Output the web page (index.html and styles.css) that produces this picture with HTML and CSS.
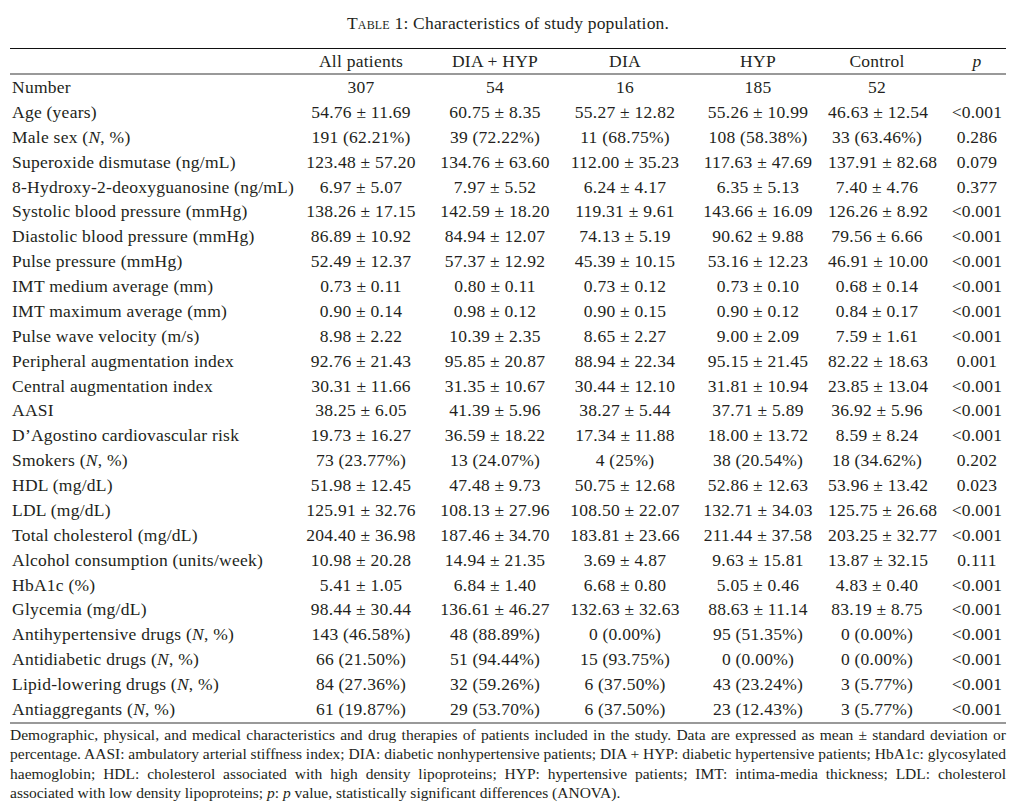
FILE: index.html
```html
<!DOCTYPE html>
<html>
<head>
<meta charset="utf-8">
<link rel="stylesheet" href="styles.css">
</head>
<body>
<div class="page">
  <div class="title"><span class="sc">Table</span> 1: Characteristics of study population.</div>
  <table class="data">
    <colgroup>
      <col class="c-label"><col class="c1"><col class="c2"><col class="c3"><col class="c4"><col class="c5"><col class="c6">
    </colgroup>
    <thead>
      <tr><th class="label"></th><th>All patients</th><th>DIA + HYP</th><th>DIA</th><th>HYP</th><th>Control</th><th class="pv"><i>p</i></th></tr>
    </thead>
    <tbody>
      <tr><td class="label">Number</td><td>307</td><td>54</td><td>16</td><td>185</td><td>52</td><td class="pv"></td></tr>
      <tr><td class="label">Age (years)</td><td>54.76 ± 11.69</td><td>60.75 ± 8.35</td><td>55.27 ± 12.82</td><td>55.26 ± 10.99</td><td>46.63 ± 12.54</td><td class="pv">&lt;0.001</td></tr>
      <tr><td class="label">Male sex (<i>N</i>, %)</td><td>191 (62.21%)</td><td>39 (72.22%)</td><td>11 (68.75%)</td><td>108 (58.38%)</td><td>33 (63.46%)</td><td class="pv">0.286</td></tr>
      <tr><td class="label">Superoxide dismutase (ng/mL)</td><td>123.48 ± 57.20</td><td>134.76 ± 63.60</td><td>112.00 ± 35.23</td><td>117.63 ± 47.69</td><td>137.91 ± 82.68</td><td class="pv">0.079</td></tr>
      <tr><td class="label">8-Hydroxy-2-deoxyguanosine (ng/mL)</td><td>6.97 ± 5.07</td><td>7.97 ± 5.52</td><td>6.24 ± 4.17</td><td>6.35 ± 5.13</td><td>7.40 ± 4.76</td><td class="pv">0.377</td></tr>
      <tr><td class="label">Systolic blood pressure (mmHg)</td><td>138.26 ± 17.15</td><td>142.59 ± 18.20</td><td>119.31 ± 9.61</td><td>143.66 ± 16.09</td><td>126.26 ± 8.92</td><td class="pv">&lt;0.001</td></tr>
      <tr><td class="label">Diastolic blood pressure (mmHg)</td><td>86.89 ± 10.92</td><td>84.94 ± 12.07</td><td>74.13 ± 5.19</td><td>90.62 ± 9.88</td><td>79.56 ± 6.66</td><td class="pv">&lt;0.001</td></tr>
      <tr><td class="label">Pulse pressure (mmHg)</td><td>52.49 ± 12.37</td><td>57.37 ± 12.92</td><td>45.39 ± 10.15</td><td>53.16 ± 12.23</td><td>46.91 ± 10.00</td><td class="pv">&lt;0.001</td></tr>
      <tr><td class="label">IMT medium average (mm)</td><td>0.73 ± 0.11</td><td>0.80 ± 0.11</td><td>0.73 ± 0.12</td><td>0.73 ± 0.10</td><td>0.68 ± 0.14</td><td class="pv">&lt;0.001</td></tr>
      <tr><td class="label">IMT maximum average (mm)</td><td>0.90 ± 0.14</td><td>0.98 ± 0.12</td><td>0.90 ± 0.15</td><td>0.90 ± 0.12</td><td>0.84 ± 0.17</td><td class="pv">&lt;0.001</td></tr>
      <tr><td class="label">Pulse wave velocity (m/s)</td><td>8.98 ± 2.22</td><td>10.39 ± 2.35</td><td>8.65 ± 2.27</td><td>9.00 ± 2.09</td><td>7.59 ± 1.61</td><td class="pv">&lt;0.001</td></tr>
      <tr><td class="label">Peripheral augmentation index</td><td>92.76 ± 21.43</td><td>95.85 ± 20.87</td><td>88.94 ± 22.34</td><td>95.15 ± 21.45</td><td>82.22 ± 18.63</td><td class="pv">0.001</td></tr>
      <tr><td class="label">Central augmentation index</td><td>30.31 ± 11.66</td><td>31.35 ± 10.67</td><td>30.44 ± 12.10</td><td>31.81 ± 10.94</td><td>23.85 ± 13.04</td><td class="pv">&lt;0.001</td></tr>
      <tr><td class="label">AASI</td><td>38.25 ± 6.05</td><td>41.39 ± 5.96</td><td>38.27 ± 5.44</td><td>37.71 ± 5.89</td><td>36.92 ± 5.96</td><td class="pv">&lt;0.001</td></tr>
      <tr><td class="label">D’Agostino cardiovascular risk</td><td>19.73 ± 16.27</td><td>36.59 ± 18.22</td><td>17.34 ± 11.88</td><td>18.00 ± 13.72</td><td>8.59 ± 8.24</td><td class="pv">&lt;0.001</td></tr>
      <tr><td class="label">Smokers (<i>N</i>, %)</td><td>73 (23.77%)</td><td>13 (24.07%)</td><td>4 (25%)</td><td>38 (20.54%)</td><td>18 (34.62%)</td><td class="pv">0.202</td></tr>
      <tr><td class="label">HDL (mg/dL)</td><td>51.98 ± 12.45</td><td>47.48 ± 9.73</td><td>50.75 ± 12.68</td><td>52.86 ± 12.63</td><td>53.96 ± 13.42</td><td class="pv">0.023</td></tr>
      <tr><td class="label">LDL (mg/dL)</td><td>125.91 ± 32.76</td><td>108.13 ± 27.96</td><td>108.50 ± 22.07</td><td>132.71 ± 34.03</td><td>125.75 ± 26.68</td><td class="pv">&lt;0.001</td></tr>
      <tr><td class="label">Total cholesterol (mg/dL)</td><td>204.40 ± 36.98</td><td>187.46 ± 34.70</td><td>183.81 ± 23.66</td><td>211.44 ± 37.58</td><td>203.25 ± 32.77</td><td class="pv">&lt;0.001</td></tr>
      <tr><td class="label">Alcohol consumption (units/week)</td><td>10.98 ± 20.28</td><td>14.94 ± 21.35</td><td>3.69 ± 4.87</td><td>9.63 ± 15.81</td><td>13.87 ± 32.15</td><td class="pv">0.111</td></tr>
      <tr><td class="label">HbA1c (%)</td><td>5.41 ± 1.05</td><td>6.84 ± 1.40</td><td>6.68 ± 0.80</td><td>5.05 ± 0.46</td><td>4.83 ± 0.40</td><td class="pv">&lt;0.001</td></tr>
      <tr><td class="label">Glycemia (mg/dL)</td><td>98.44 ± 30.44</td><td>136.61 ± 46.27</td><td>132.63 ± 32.63</td><td>88.63 ± 11.14</td><td>83.19 ± 8.75</td><td class="pv">&lt;0.001</td></tr>
      <tr><td class="label">Antihypertensive drugs (<i>N</i>, %)</td><td>143 (46.58%)</td><td>48 (88.89%)</td><td>0 (0.00%)</td><td>95 (51.35%)</td><td>0 (0.00%)</td><td class="pv">&lt;0.001</td></tr>
      <tr><td class="label">Antidiabetic drugs (<i>N</i>, %)</td><td>66 (21.50%)</td><td>51 (94.44%)</td><td>15 (93.75%)</td><td>0 (0.00%)</td><td>0 (0.00%)</td><td class="pv">&lt;0.001</td></tr>
      <tr><td class="label">Lipid-lowering drugs (<i>N</i>, %)</td><td>84 (27.36%)</td><td>32 (59.26%)</td><td>6 (37.50%)</td><td>43 (23.24%)</td><td>3 (5.77%)</td><td class="pv">&lt;0.001</td></tr>
      <tr><td class="label">Antiaggregants (<i>N</i>, %)</td><td>61 (19.87%)</td><td>29 (53.70%)</td><td>6 (37.50%)</td><td>23 (12.43%)</td><td>3 (5.77%)</td><td class="pv">&lt;0.001</td></tr>
    </tbody>
  </table>
  <div class="notes">
    <div class="ln">Demographic, physical, and medical characteristics and drug therapies of patients included in the study. Data are expressed as mean ± standard deviation or</div>
    <div class="ln">percentage. AASI: ambulatory arterial stiffness index; DIA: diabetic nonhypertensive patients; DIA + HYP: diabetic hypertensive patients; HbA1c: glycosylated</div>
    <div class="ln">haemoglobin; HDL: cholesterol associated with high density lipoproteins; HYP: hypertensive patients; IMT: intima-media thickness; LDL: cholesterol</div>
    <div class="ln last">associated with low density lipoproteins; <i>p</i>: <i>p</i> value, statistically significant differences (ANOVA).</div>
  </div>
</div>
</body>
</html>
```

FILE: styles.css
```css
html, body {
  margin: 0;
  padding: 0;
  background: #ffffff;
}
body {
  font-family: "Liberation Serif", "Times New Roman", serif;
  color: #231f20;
}
.page {
  width: 996px;
  padding: 12px 8px 0 10px;
}
.title {
  text-align: center;
  font-size: 17.5px;
  letter-spacing: 0.2px;
  line-height: 22px;
  height: 36px;
}
.sc {
  font-variant: small-caps;
}
.data {
  width: 996px;
  border-collapse: collapse;
  table-layout: fixed;
  font-size: 17.5px;
  letter-spacing: 0.25px;
  border-top: 1px solid #111;
  border-bottom: 2px solid #999;
}
.c-label { width: 284px; }
.c1 { width: 134px; }
.c2 { width: 134px; }
.c3 { width: 126px; }
.c4 { width: 140px; }
.c5 { width: 98px; }
.c6 { width: 80px; }
.data th,
.data td {
  padding: 0;
  text-align: center;
  font-weight: normal;
  white-space: nowrap;
  height: 24.88px;
  line-height: 24.88px;
}
.data thead th {
  height: 24px;
  line-height: 24px;
  border-bottom: 2px solid #999;
}
.data .label {
  text-align: left;
  padding-left: 2px;
}
.data .pv {
  padding-left: 22px;
}
.notes {
  font-size: 15.5px;
  line-height: 19.4px;
  padding-top: 1px;
}
.ln {
  text-align: justify;
  text-align-last: justify;
  white-space: nowrap;
}
.ln.last {
  text-align-last: left;
}
```
